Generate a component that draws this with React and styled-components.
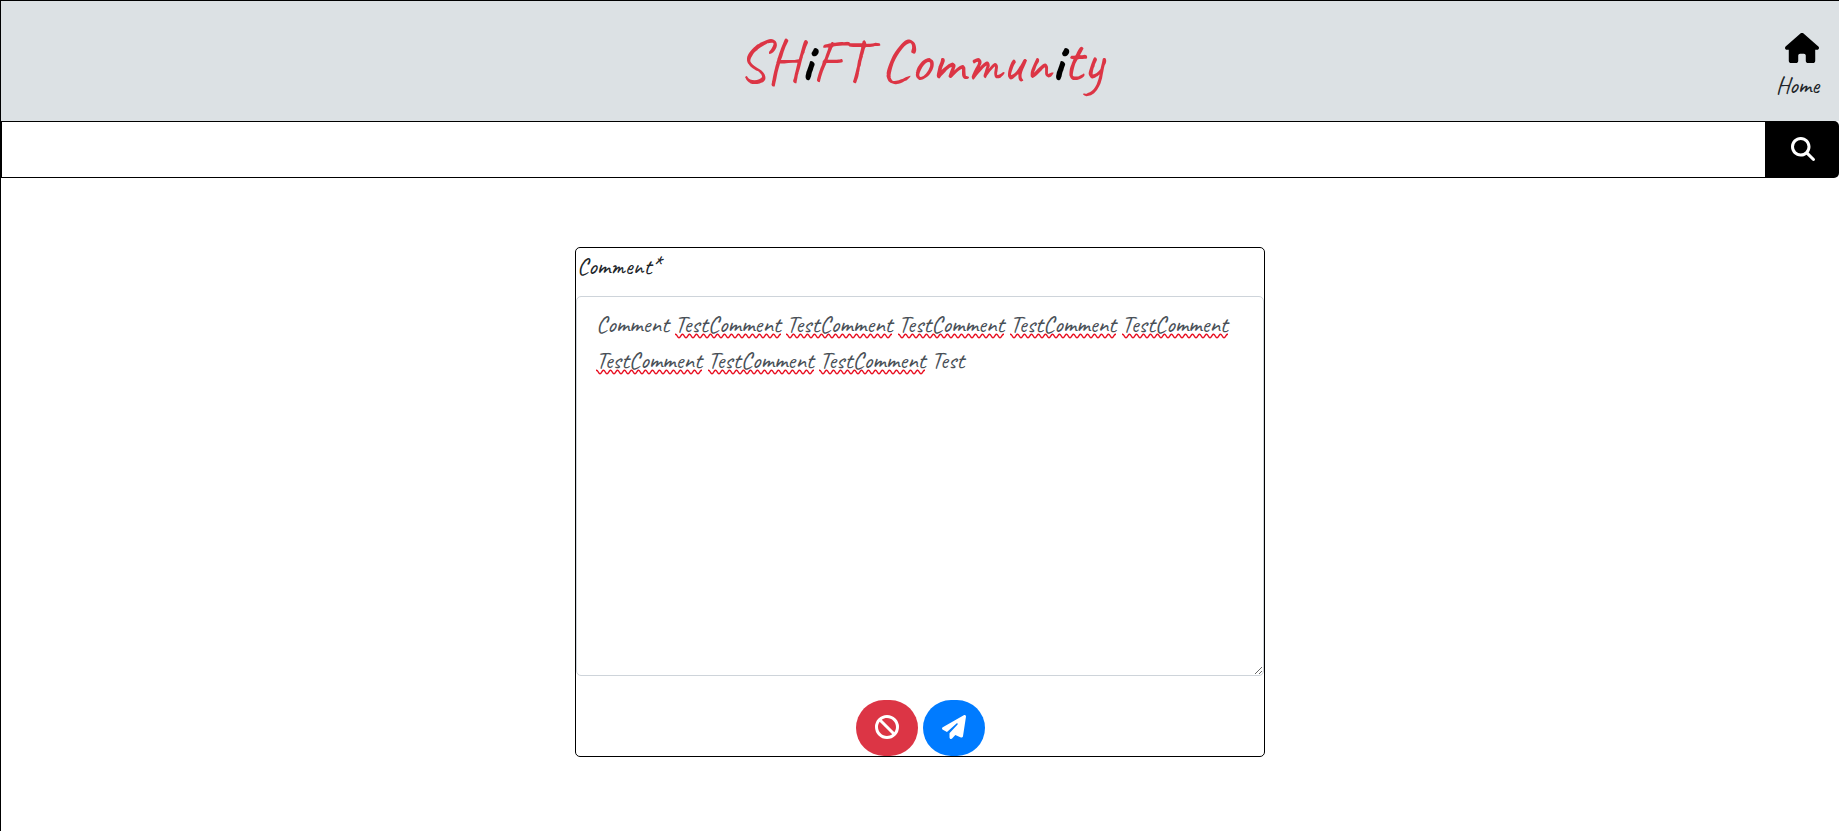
import React, { useState } from "react";
import styled, { createGlobalStyle } from "styled-components";
import { FaHouse, FaMagnifyingGlass, FaBan, FaPaperPlane } from "react-icons/fa6";

const GlobalStyle = createGlobalStyle`
  *, *::before, *::after { box-sizing: border-box; }
  body {
    margin: 0;
    background: #fff;
    color: #212529;
    font-family: Caveat, cursive;
    font-size: 24px;
    line-height: 36px;
  }
  button, input, textarea { font: inherit; color: inherit; margin: 0; }
`;

const Page = styled.div`
  min-height: 100vh;
  border-left: 1px solid #000;
`;

const Header = styled.header`
  display: grid;
  grid-template-columns: 1fr auto 1fr;
  align-items: center;
  height: 121px;
  border-top: 1px solid #000;
  background: #dce1e4;
`;

const Title = styled.h1`
  grid-column: 2;
  margin: 0;
  color: #dc3545;
  font-size: 60px;
  font-weight: 500;
  line-height: 72px;
`;

const Dark = styled.span`
  color: #000;
  font-weight: 700;
`;

const HomeLink = styled.a`
  justify-self: end;
  display: flex;
  flex-direction: column;
  align-items: flex-end;
  gap: 4px;
  padding: 10px 20px 0 0;
  color: #212529;
  line-height: 32px;
  text-decoration: none;

  svg { color: #000; }
`;

const SearchBar = styled.form`
  display: flex;
  height: 57px;
`;

const SearchInput = styled.input`
  flex: 1;
  min-width: 0;
  padding: 0 20px;
  border: 1px solid #000;
  border-radius: 0;
  background: #fff;
  outline: none;
`;

const SearchButton = styled.button`
  display: grid;
  place-items: center;
  width: 73px;
  padding: 0 0 2px;
  border: 0;
  border-radius: 0 5px 5px 0;
  background: #000;
  color: #fff;
`;

const Card = styled.form`
  width: calc(37.5% + 1px);
  margin: 69px auto 0;
  border: 1px solid #000;
  border-radius: 5px;
`;

const Label = styled.label`
  display: block;
  padding: 0 1px 12px;
  font-weight: 500;
`;

const Editor = styled.div`
  display: grid;
  font-feature-settings: "calt" 0;

  > * {
    grid-area: 1 / 1;
    height: 380px;
    padding: 9px 19px;
    border: 1px solid transparent;
    white-space: pre-wrap;
    overflow-wrap: break-word;
    font-feature-settings: inherit;
  }
`;

const TextArea = styled.textarea`
  width: 100%;
  border-color: #ced4da;
  border-radius: 5px;
  background: transparent;
  color: #495057;
  resize: vertical;
  outline: none;
`;

const SpellingLayer = styled.div`
  color: transparent;
`;

const wave = encodeURIComponent(
  `<svg xmlns="http://www.w3.org/2000/svg" width="7" height="6"><path d="M-3 4.8C-1.500 4.800-1 1.200.5 1.200S2.500 4.800 4 4.800S6 1.200 7.500 1.200" fill="none" stroke="#e81123" stroke-width="1.500"/></svg>`
);

const Misspelt = styled.span`
  background: url("data:image/svg+xml,${wave}") repeat-x left bottom;
`;

const Actions = styled.div`
  display: flex;
  justify-content: center;
  gap: 5px;
  padding-top: 24px;
`;

const RoundButton = styled.button`
  display: grid;
  place-items: center;
  width: 62px;
  height: 56px;
  padding: 0 0 2px;
  border: 0;
  border-radius: 30px;
  background: ${(p) => p.$color};
  color: #fff;
`;

const KNOWN = /^(Comment|Test|\s+)$/;

function Spelling({ text }) {
  return (
    <SpellingLayer aria-hidden="true">
      {text.split(/(\s+)/).map((part, i) =>
        KNOWN.test(part) ? part : <Misspelt key={i}>{part}</Misspelt>
      )}
    </SpellingLayer>
  );
}

export default function App() {
  const [comment, setComment] = useState(
    "Comment " + "TestComment ".repeat(8) + "Test"
  );

  return (
    <>
      <GlobalStyle />
      <Page>
        <Header>
          <Title>
            SH<Dark>i</Dark>FT Commun<Dark>i</Dark>ty
          </Title>
          <HomeLink href="#home">
            <FaHouse size={34} />
            Home
          </HomeLink>
        </Header>
        <SearchBar onSubmit={(e) => e.preventDefault()}>
          <SearchInput type="text" aria-label="Search" />
          <SearchButton type="submit" aria-label="Search">
            <FaMagnifyingGlass size={24} />
          </SearchButton>
        </SearchBar>
        <Card onSubmit={(e) => e.preventDefault()}>
          <Label htmlFor="comment">Comment*</Label>
          <Editor>
            <Spelling text={comment} />
            <TextArea
              id="comment"
              spellCheck={false}
              value={comment}
              onChange={(e) => setComment(e.target.value)}
            />
          </Editor>
          <Actions>
            <RoundButton type="reset" $color="#dc3545" aria-label="Cancel">
              <FaBan size={24} />
            </RoundButton>
            <RoundButton type="submit" $color="#007bff" aria-label="Send">
              <FaPaperPlane size={24} />
            </RoundButton>
          </Actions>
        </Card>
      </Page>
    </>
  );
}
